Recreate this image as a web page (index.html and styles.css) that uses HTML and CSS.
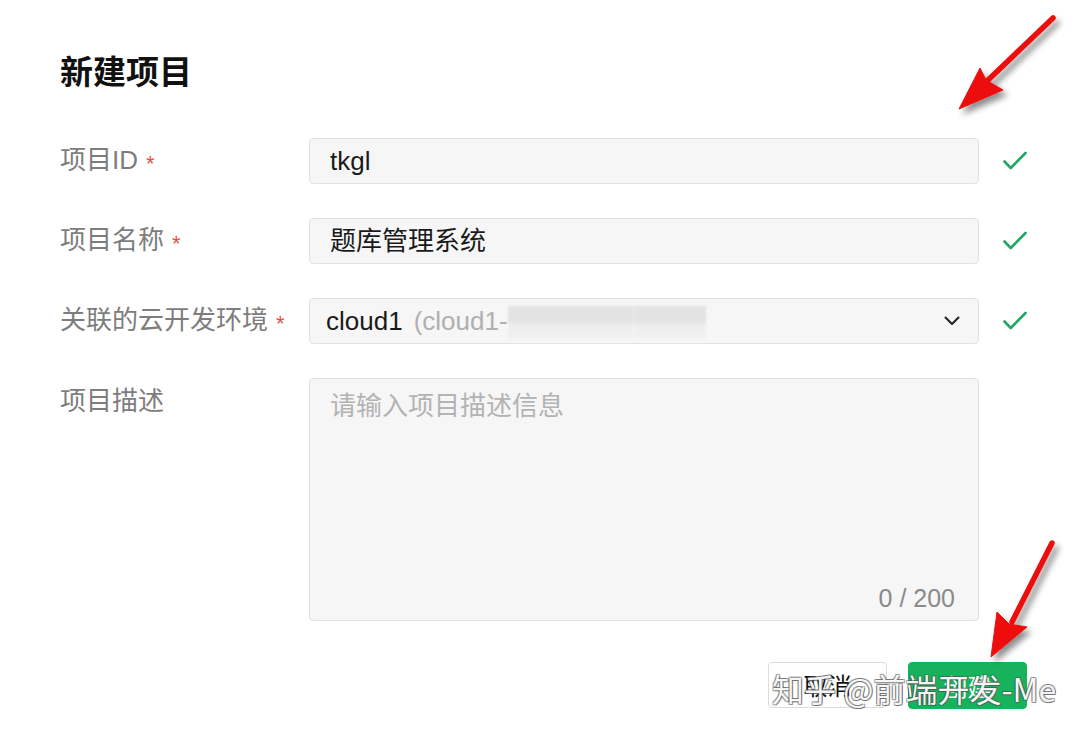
FILE: index.html
```html
<!DOCTYPE html>
<html lang="zh-CN">
<head>
<meta charset="utf-8">
<title>新建项目</title>
<link rel="stylesheet" href="styles.css">
</head>
<body>
<div class="dialog">
  <h1 class="title">新建项目</h1>
  <div class="form">
    <label class="label">项目ID<span class="req">*</span></label>
    <div class="field"><span class="value">tkgl</span></div>
    <svg class="check" viewBox="0 0 24 20" width="24" height="20"><path d="M1.5 10.5 L7.8 17 L22.5 2" fill="none" stroke="#1fa865" stroke-width="2.6" stroke-linecap="round" stroke-linejoin="round"/></svg>

    <label class="label">项目名称<span class="req">*</span></label>
    <div class="field"><span class="value">题库管理系统</span></div>
    <svg class="check" viewBox="0 0 24 20" width="24" height="20"><path d="M1.5 10.5 L7.8 17 L22.5 2" fill="none" stroke="#1fa865" stroke-width="2.6" stroke-linecap="round" stroke-linejoin="round"/></svg>

    <label class="label">关联的云开发环境<span class="req">*</span></label>
    <div class="field select">
      <span class="env">cloud1</span><span class="env-id">(cloud1-</span><span class="blur"></span>
      <svg class="chevron" viewBox="0 0 16 10" width="16" height="10"><path d="M1.5 1.5 L8 8 L14.5 1.5" fill="none" stroke="#222" stroke-width="2" stroke-linecap="round" stroke-linejoin="round"/></svg>
    </div>
    <svg class="check" viewBox="0 0 24 20" width="24" height="20"><path d="M1.5 10.5 L7.8 17 L22.5 2" fill="none" stroke="#1fa865" stroke-width="2.6" stroke-linecap="round" stroke-linejoin="round"/></svg>

    <label class="label label-top">项目描述</label>
    <div class="field textarea">
      <span class="placeholder">请输入项目描述信息</span>
      <span class="counter">0 / 200</span>
    </div>
    <span></span>
  </div>
  <div class="actions">
    <button class="btn btn-cancel">取消</button>
    <button class="btn btn-primary">创建</button>
  </div>
</div>

<div class="watermark">知乎 @前端开发-Me</div>

<svg class="arrows" width="1084" height="733" viewBox="0 0 1084 733">
  <defs>
    <filter id="sh" x="-30%" y="-30%" width="160%" height="160%">
      <feGaussianBlur in="SourceAlpha" stdDeviation="3"/>
      <feOffset dx="4" dy="5" result="b"/>
      <feComponentTransfer><feFuncA type="linear" slope="0.45"/></feComponentTransfer>
      <feMerge><feMergeNode/><feMergeNode in="SourceGraphic"/></feMerge>
    </filter>
  </defs>
  <g filter="url(#sh)" fill="#ee1111" stroke="#ee1111">
    <line x1="1053" y1="18" x2="985" y2="83" stroke-width="5.5" stroke-linecap="round"/>
    <polygon points="959,109 980,68 986,80 1003,90" stroke-width="1" stroke-linejoin="round"/>
    <line x1="1052" y1="543" x2="1012" y2="622" stroke-width="5.5" stroke-linecap="round"/>
    <polygon points="991,657 997,612 1009,624 1027,627" stroke-width="1" stroke-linejoin="round"/>
  </g>
</svg>
</body>
</html>
```

FILE: styles.css
```css
* { box-sizing: border-box; }

html, body {
  margin: 0;
  padding: 0;
  background: #ffffff;
}

body {
  width: 1084px;
  height: 733px;
  overflow: hidden;
  position: relative;
  font-family: "Liberation Sans", "Noto Sans CJK SC", Arial, sans-serif;
  color: #1a1a1a;
}

.dialog {
  padding: 48px 0 0 60px;
  width: 1027px;
}

.title {
  margin: 0;
  font-family: "Noto Sans CJK SC", sans-serif;
  font-size: 33px;
  font-weight: 700;
  line-height: 44px;
  color: #111;
}

.form {
  margin-top: 46px;
  display: grid;
  grid-template-columns: 249px 670px 48px;
  grid-auto-rows: 46px;
  row-gap: 34px;
}

.label {
  align-self: center;
  font-size: 26px;
  line-height: 46px;
  color: #7d7d7d;
  white-space: nowrap;
}

.label-top { align-self: start; }

.req {
  display: inline-block;
  margin-left: 8px;
  color: #e5504a;
  font-size: 22px;
  transform: translateY(2px);
}

.field {
  display: flex;
  align-items: center;
  height: 46px;
  background: #f6f6f6;
  border: 1px solid #e2e2e2;
  border-radius: 4px;
  padding: 0 20px;
  font-size: 26px;
  color: #1a1a1a;
}

.value { line-height: 44px; }

.select { padding-left: 16px; padding-right: 18px; }

.env { color: #1a1a1a; }

.env-id {
  margin-left: 11px;
  color: #b0b0b0;
}

.blur {
  display: inline-block;
  width: 198px;
  height: 33px;
  margin-top: 2px;
  background:
    linear-gradient(90deg, rgba(255,255,255,0) 0 63%, rgba(255,255,255,0.25) 63% 64%, rgba(255,255,255,0) 64% 100%),
    linear-gradient(180deg, #e3e3e3 0 45%, #eeeeee 60%, #f1f1f1 100%);
  filter: blur(1px);
}

.chevron { margin-left: auto; margin-right: 0; }

.check {
  align-self: center;
  justify-self: end;
}

.textarea {
  height: 243px;
  align-items: flex-start;
  padding: 9px 20px;
  position: relative;
}

.placeholder {
  line-height: 36px;
  color: #b3b3b3;
}

.counter {
  position: absolute;
  right: 23px;
  bottom: 7px;
  line-height: 30px;
  font-size: 25px;
  color: #8a8a8a;
}

.actions {
  margin-top: 238px;
  display: flex;
  justify-content: flex-end;
  gap: 21px;
  width: 967px;
}

.btn {
  height: 46px;
  width: 119px;
  border-radius: 4px;
  font-family: "Noto Sans CJK SC", sans-serif;
  font-size: 24px;
  line-height: 44px;
  padding: 0;
}

.btn-cancel {
  background: #ffffff;
  border: 1px solid #dcdcdc;
  color: #111;
}

.btn-primary {
  height: 47px;
  background: #16b35c;
  border: 1px solid #16b35c;
  color: #ffffff;
}

.watermark {
  position: absolute;
  left: 772px;
  top: 667px;
  font-family: "Noto Sans CJK SC", sans-serif;
  font-size: 32px;
  line-height: 42px;
  white-space: nowrap;
  color: rgba(255, 255, 255, 0.94);
  text-shadow:
    1px 1px 0 rgba(80,80,80,0.65),
    -1px -1px 0 rgba(80,80,80,0.5),
    1px -1px 0 rgba(80,80,80,0.5),
    -1px 1px 0 rgba(80,80,80,0.5);
  pointer-events: none;
}

.arrows {
  position: absolute;
  left: 0;
  top: 0;
  pointer-events: none;
}
```
